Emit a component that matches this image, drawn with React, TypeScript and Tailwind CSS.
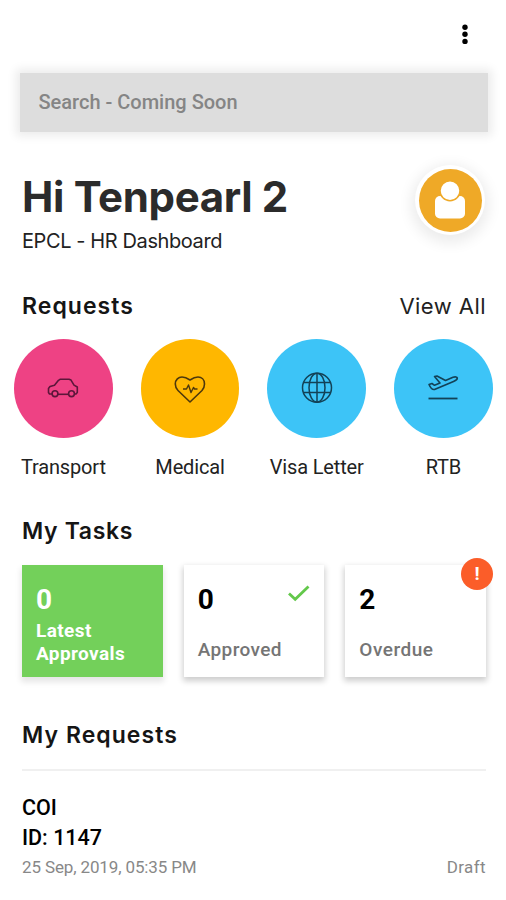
import type { ReactNode } from 'react'

interface RequestType {
  label: string
  color: string
  icon: ReactNode
}

function CarIcon() {
  return (
    <svg width="32" height="32" viewBox="0 0 32 32" fill="none" stroke="#5c163a" strokeWidth="1.6" strokeLinejoin="round">
      <path d="M5 22H2.500L1.500 20.500V16.500L3 14.500L7.500 13.300L11.500 8.300L13 7.300H22L24 8.100L27 13.100L30.300 15V20.500L29 22H27.500" />
      <path d="M11 22.300H21.500" />
      <circle cx="8" cy="21.700" r="2.900" />
      <circle cx="24.500" cy="21.700" r="2.900" />
    </svg>
  )
}

function HeartIcon() {
  return (
    <svg width="32" height="32" viewBox="0 0 32 32" fill="none" stroke="#4d380c" strokeWidth="1.6" strokeLinejoin="round">
      <path d="M16 30L4 18.500C1.500 16 1.300 13.500 1.300 12C1.300 7.500 4.500 5 8 5C11.500 5 13.500 6.300 16 8C18.500 6.300 20.500 5 24 5C27.500 5 30.500 7.500 30.500 12C30.500 14 30 16.300 28 18.500Z" />
      <path d="M9 17H12.500L14.500 13L17 20.500L19.500 15.500L20.500 17H23.500" strokeWidth="1.400" />
    </svg>
  )
}

function GlobeIcon() {
  return (
    <svg width="32" height="32" viewBox="0 0 32 32" fill="none" stroke="#134257" strokeWidth="1.5">
      <circle cx="16" cy="15.700" r="14.500" />
      <ellipse cx="16" cy="15.700" rx="8" ry="14.500" />
      <path d="M16 1.200V30.200M3 10.500H29M3 20.500H29" />
    </svg>
  )
}

function TakeoffIcon() {
  return (
    <svg width="32" height="32" viewBox="0 0 32 32" fill="none" stroke="#134257" strokeWidth="1.6" strokeLinejoin="round">
      <path d="M2 12.500L5 11.500L7.500 13.300L13 11L7.500 4.500L10 4L18.500 8.500L26 5.300C28.500 4.500 30 5 30.300 6C30.500 7.500 28 8.800 26.500 9.400L7.500 17.500C5 18 3.800 16.500 2 12.500Z" />
      <path d="M1.500 26.500H30.500" strokeWidth="1.800" />
    </svg>
  )
}

const requestTypes: RequestType[] = [
  { label: 'Transport', color: 'bg-[#ee4284]', icon: <CarIcon /> },
  { label: 'Medical', color: 'bg-[#ffb700]', icon: <HeartIcon /> },
  { label: 'Visa Letter', color: 'bg-[#3dc4f7]', icon: <GlobeIcon /> },
  { label: 'RTB', color: 'bg-[#3dc4f7]', icon: <TakeoffIcon /> },
]

function SectionTitle({ children, tracking = 'tracking-[1.05px]' }: { children: ReactNode; tracking?: string }) {
  return (
    <h2 className={`font-[Inter,sans-serif] text-[23px] leading-7 font-semibold text-[#151515] ${tracking}`}>
      {children}
    </h2>
  )
}

export default function App() {
  return (
    <div className="h-[900px] w-[506px] overflow-hidden bg-white font-[Roboto,sans-serif] text-[#111]">
      {/* Top bar */}
      <header className="flex h-[73px] justify-end pt-6 pr-[35px]">
        <svg width="12" height="22" viewBox="0 0 12 22" fill="#000">
          <circle cx="6" cy="3.200" r="2.700" />
          <circle cx="6" cy="10.300" r="2.700" />
          <circle cx="6" cy="17.400" r="2.700" />
        </svg>
      </header>

      {/* Search */}
      <div className="mr-[18px] ml-5 flex h-[59px] items-center bg-[#dddddd] pb-0.5 pl-[18.5px] text-[20px] font-medium text-[#858585] shadow-[0_0_9px_4px_rgba(0,0,0,0.08)]">
        Search - Coming Soon
      </div>

      {/* Greeting */}
      <div className="mt-8 flex h-[92px] justify-between pr-[21px] pl-[22px]">
        <div className="pt-2">
          <h1 className="font-[Inter,sans-serif] text-[42px] leading-[50px] font-bold tracking-[-0.35px] text-[#2b2b2b]">
            Hi Tenpearl 2
          </h1>
          <p className="mt-[7px] font-[Inter,sans-serif] text-[20px] leading-6 tracking-[-0.4px] text-[#222]">EPCL - HR Dashboard</p>
        </div>
        <div className="mt-px flex size-[70px] items-center justify-center rounded-full bg-white shadow-[0_4px_14px_4px_rgba(0,0,0,0.08)]">
          <div className="flex size-[63px] items-center justify-center rounded-full bg-[#efa927]">
            <svg width="32" height="40" viewBox="0 0 32 40">
              <rect x="1" y="16" width="30" height="22.500" rx="5" fill="#fff" />
              <circle cx="16" cy="10.700" r="10" fill="#fff" stroke="#efa927" strokeWidth="1.500" />
            </svg>
          </div>
        </div>
      </div>

      {/* Requests */}
      <div className="mt-9 flex items-center justify-between pr-5 pl-[22px]">
        <SectionTitle>Requests</SectionTitle>
        <span className="font-[Inter,sans-serif] text-[22px] leading-7 tracking-[0.45px] text-[#222]">View All</span>
      </div>
      <div className="mt-[19px] flex gap-7 pl-3.5">
        {requestTypes.map(type => (
          <div key={type.label} className="flex w-[98.7px] shrink-0 flex-col items-center">
            <div className={`flex size-[98.7px] items-center justify-center rounded-full ${type.color}`}>
              {type.icon}
            </div>
            <span className="mt-[17px] text-[20px] leading-6 tracking-[-0.15px] whitespace-nowrap text-[#222]">{type.label}</span>
          </div>
        ))}
      </div>

      {/* Tasks */}
      <div className="mt-[38.3px] pr-5 pl-[22px]">
        <SectionTitle tracking="tracking-[0.65px]">My Tasks</SectionTitle>
        <div className="mt-5 grid grid-cols-3 gap-[21px]">
          <div className="h-[112px] bg-[#73d05a] pt-[18px] pl-3.5 text-white shadow-[0_4px_6px_1px_rgba(0,0,0,0.1)]">
            <div className="text-[28px] leading-[33px] font-bold">0</div>
            <div className="mt-[3px] text-[19px] leading-[23px] font-bold tracking-[0.4px]">
              Latest
              <br />
              Approvals
            </div>
          </div>
          <div className="h-[112px] bg-white pt-[18px] pl-3.5 shadow-[0_3px_6px_1px_rgba(0,0,0,0.2)]">
            <div className="flex justify-between pr-3.5">
              <span className="text-[28px] leading-[33px] font-bold text-black">0</span>
              <svg className="mt-0.5" width="22" height="17" viewBox="0 0 22 17" fill="none" stroke="#63c84b" strokeWidth="2.800">
                <path d="M1 8.500L7.200 14.300L20.500 1.500" />
              </svg>
            </div>
            <div className="mt-[22px] text-[19px] leading-6 font-medium tracking-[0.4px] text-[#757575]">Approved</div>
          </div>
          <div className="relative h-[112px] bg-white pt-[18px] pl-3.5 shadow-[0_3px_6px_1px_rgba(0,0,0,0.2)]">
            <div className="text-[28px] leading-[33px] font-bold text-black">2</div>
            <div className="mt-[22px] text-[19px] leading-6 font-medium tracking-[0.5px] text-[#757575]">Overdue</div>
            <span className="absolute -top-[7px] -right-[7px] flex size-8 items-center justify-center rounded-full bg-[#fb5d29] text-[19px] font-bold text-white">
              !
            </span>
          </div>
        </div>
      </div>

      {/* My requests */}
      <div className="mt-[44px] pr-5 pl-[22px]">
        <SectionTitle>My Requests</SectionTitle>
        <div className="mt-5 border-t-2 border-[#f0f0f0] pt-[22px]">
          <div className="text-[21.5px] leading-[30px] font-medium text-black">COI</div>
          <div className="text-[21.5px] leading-[30px] font-medium text-black">ID: 1147</div>
          <div className="flex justify-between text-[17px] leading-7 text-[#888]">
            <span className="tracking-[-0.13px]">25 Sep, 2019, 05:35 PM</span>
            <span className="tracking-[0.4px]">Draft</span>
          </div>
        </div>
      </div>
    </div>
  )
}
